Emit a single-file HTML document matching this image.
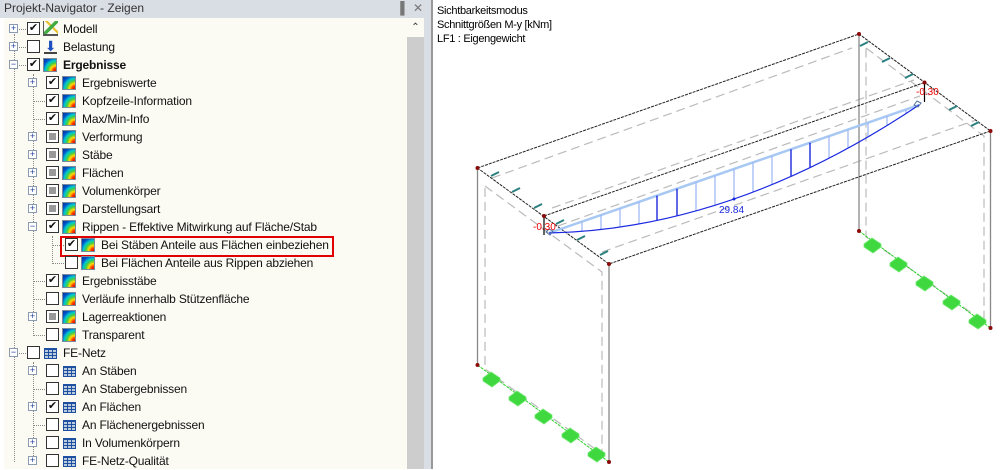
<!DOCTYPE html>
<html><head><meta charset="utf-8">
<style>
*{margin:0;padding:0;box-sizing:border-box}
body{width:1006px;height:469px;overflow:hidden;background:#fff;font-family:"Liberation Sans",Arial,sans-serif;position:relative}
#title{position:absolute;left:0;top:0;width:431px;height:18px;background:#d9dde4;font-size:12px;color:#333;padding:1px 0 0 4px}
#title .btn{position:absolute;top:1px;font-size:12px;color:#777}
#panel{position:absolute;left:4px;top:18px;width:403px;height:451px;background:#fbfbf3}
#sb{position:absolute;left:407px;top:18px;width:17px;height:451px;background:#cdcdcd}
#sbup{position:absolute;left:407px;top:18px;width:17px;height:19px;background:#fbfbf3;font-size:10px;color:#333;text-align:center;line-height:20px}
#gap{position:absolute;left:424px;top:18px;width:7px;height:451px;background:#d9dde4}
#vline{position:absolute;left:431px;top:0;width:2px;height:469px;background:#999}
.r{position:absolute;height:18px;font-size:12px;color:#111;white-space:nowrap;letter-spacing:-0.17px}
.ex{position:absolute;width:9px;height:9px;border:1px solid #8a9ab0;background:#fff;font-size:9px;line-height:7px;text-align:center;color:#2040a0;letter-spacing:0}
.cb{position:absolute;width:13px;height:13px;border:1px solid #333;background:#fff;top:2px;font-size:11px;line-height:11px;text-align:center;color:#111;letter-spacing:0}
.cb.i::after{content:"";position:absolute;left:2px;top:2px;width:7px;height:7px;background:#999}
.ic{position:absolute;width:14px;height:14px;top:2px;border:1px solid #7a8a9a;background:radial-gradient(circle at 100% 100%,#d00 0,#f40 18%,#fd0 32%,#4c4 48%,#0cc 62%,#05c 78%,#039 100%)}
.gr{position:absolute;width:13px;height:11px;top:4px;border:1px solid #1f4fa0;background:repeating-linear-gradient(90deg,transparent 0 3px,#1f4fa0 3px 4px),repeating-linear-gradient(0deg,#bcd 0 2px,#1f4fa0 2px 3px)}
.tx{position:absolute;top:2px}
.hd{position:absolute;border-left:1px dotted #888}
.hh{position:absolute;border-top:1px dotted #888;height:0}
#info{position:absolute;left:437px;top:4px;font-size:11px;line-height:14px;color:#000;letter-spacing:-0.3px}
</style></head><body>
<div id="title">Projekt-Navigator - Zeigen<span class="btn" style="left:396px">&#x2590;</span><span class="btn" style="left:413px">✕</span></div>
<div id="panel"></div>
<div id="sb"></div><div id="sbup">&#x2303;</div>
<div id="gap"></div><div id="vline"></div>

<div class="hd" style="left:14px;top:34px;height:428px"></div>
<div class="hd" style="left:33px;top:74px;height:262px"></div>
<div class="hd" style="left:33px;top:362px;height:100px"></div>
<div class="hd" style="left:52px;top:236px;height:28px"></div>
<div class="hh" style="left:14px;top:29px;width:12px"></div>
<div class="hh" style="left:14px;top:47px;width:12px"></div>
<div class="hh" style="left:14px;top:65px;width:12px"></div>
<div class="hh" style="left:14px;top:353px;width:12px"></div>
<div class="hh" style="left:52px;top:245px;width:12px"></div>
<div class="hh" style="left:52px;top:263px;width:12px"></div>

<div class="r" style="top:20px;left:0"><div class="ex" style="left:9px;top:4px">+</div><div class="cb" style="left:27px">✔</div><div style="position:absolute;left:43px;top:1px;width:15px;height:15px;border-bottom:2px solid #555;border-left:1px solid #555;background:linear-gradient(135deg,transparent 40%,#4a4 41% 58%,transparent 59%),linear-gradient(45deg,transparent 50%,#e9c030 51% 62%,transparent 63%)"></div><span class="tx" style="left:63px">Modell</span></div>
<div class="r" style="top:38px;left:0"><div class="ex" style="left:9px;top:4px">+</div><div class="cb" style="left:27px"></div><div style="position:absolute;left:44px;top:2px;width:13px;height:14px;color:#2050c0;font-size:14px;line-height:12px;text-align:center;border-bottom:2px solid #444">⬇</div><span class="tx" style="left:63px">Belastung</span></div>
<div class="r" style="top:56px;left:0"><div class="ex" style="left:9px;top:4px">−</div><div class="cb" style="left:27px">✔</div><div class="ic" style="left:43px"></div><span class="tx" style="left:63px;font-weight:bold">Ergebnisse</span></div>

<div class="r" style="top:74px;left:19px"><div class="ex" style="left:9px;top:4px">+</div><div class="cb" style="left:27px">✔</div><div class="ic" style="left:43px"></div><span class="tx" style="left:63px">Ergebniswerte</span></div>
<div class="r" style="top:92px;left:19px"><div class="hh" style="left:14px;top:9px;width:12px"></div><div class="cb" style="left:27px">✔</div><div class="ic" style="left:43px"></div><span class="tx" style="left:63px">Kopfzeile-Information</span></div>
<div class="r" style="top:110px;left:19px"><div class="hh" style="left:14px;top:9px;width:12px"></div><div class="cb" style="left:27px">✔</div><div class="ic" style="left:43px"></div><span class="tx" style="left:63px">Max/Min-Info</span></div>
<div class="r" style="top:128px;left:19px"><div class="ex" style="left:9px;top:4px">+</div><div class="cb i" style="left:27px"></div><div class="ic" style="left:43px"></div><span class="tx" style="left:63px">Verformung</span></div>
<div class="r" style="top:146px;left:19px"><div class="ex" style="left:9px;top:4px">+</div><div class="cb i" style="left:27px"></div><div class="ic" style="left:43px"></div><span class="tx" style="left:63px">Stäbe</span></div>
<div class="r" style="top:164px;left:19px"><div class="ex" style="left:9px;top:4px">+</div><div class="cb i" style="left:27px"></div><div class="ic" style="left:43px"></div><span class="tx" style="left:63px">Flächen</span></div>
<div class="r" style="top:182px;left:19px"><div class="ex" style="left:9px;top:4px">+</div><div class="cb i" style="left:27px"></div><div class="ic" style="left:43px"></div><span class="tx" style="left:63px">Volumenkörper</span></div>
<div class="r" style="top:200px;left:19px"><div class="ex" style="left:9px;top:4px">+</div><div class="cb i" style="left:27px"></div><div class="ic" style="left:43px"></div><span class="tx" style="left:63px">Darstellungsart</span></div>
<div class="r" style="top:218px;left:19px"><div class="ex" style="left:9px;top:4px">−</div><div class="cb" style="left:27px">✔</div><div class="ic" style="left:43px"></div><span class="tx" style="left:63px">Rippen - Effektive Mitwirkung auf Fläche/Stab</span></div>
<div class="r" style="top:236px;left:38px"><div class="cb" style="left:27px">✔</div><div class="ic" style="left:43px"></div><span class="tx" style="left:63px">Bei Stäben Anteile aus Flächen einbeziehen</span></div>
<div style="position:absolute;left:60px;top:236px;width:274px;height:21px;border:2px solid #e00000"></div>
<div class="r" style="top:254px;left:38px"><div class="cb" style="left:27px"></div><div class="ic" style="left:43px"></div><span class="tx" style="left:63px">Bei Flächen Anteile aus Rippen abziehen</span></div>
<div class="r" style="top:272px;left:19px"><div class="hh" style="left:14px;top:9px;width:12px"></div><div class="cb" style="left:27px">✔</div><div class="ic" style="left:43px"></div><span class="tx" style="left:63px">Ergebnisstäbe</span></div>
<div class="r" style="top:290px;left:19px"><div class="hh" style="left:14px;top:9px;width:12px"></div><div class="cb" style="left:27px"></div><div class="ic" style="left:43px"></div><span class="tx" style="left:63px">Verläufe innerhalb Stützenfläche</span></div>
<div class="r" style="top:308px;left:19px"><div class="ex" style="left:9px;top:4px">+</div><div class="cb i" style="left:27px"></div><div class="ic" style="left:43px"></div><span class="tx" style="left:63px">Lagerreaktionen</span></div>
<div class="r" style="top:326px;left:19px"><div class="hh" style="left:14px;top:9px;width:12px"></div><div class="cb" style="left:27px"></div><div class="ic" style="left:43px"></div><span class="tx" style="left:63px">Transparent</span></div>

<div class="r" style="top:344px;left:0"><div class="ex" style="left:9px;top:4px">−</div><div class="cb" style="left:27px"></div><div class="gr" style="left:44px"></div><span class="tx" style="left:63px">FE-Netz</span></div>
<div class="r" style="top:362px;left:19px"><div class="ex" style="left:9px;top:4px">+</div><div class="cb" style="left:27px"></div><div class="gr" style="left:44px"></div><span class="tx" style="left:63px">An Stäben</span></div>
<div class="r" style="top:380px;left:19px"><div class="hh" style="left:14px;top:9px;width:12px"></div><div class="cb" style="left:27px"></div><div class="gr" style="left:44px"></div><span class="tx" style="left:63px">An Stabergebnissen</span></div>
<div class="r" style="top:398px;left:19px"><div class="ex" style="left:9px;top:4px">+</div><div class="cb" style="left:27px">✔</div><div class="gr" style="left:44px"></div><span class="tx" style="left:63px">An Flächen</span></div>
<div class="r" style="top:416px;left:19px"><div class="hh" style="left:14px;top:9px;width:12px"></div><div class="cb" style="left:27px"></div><div class="gr" style="left:44px"></div><span class="tx" style="left:63px">An Flächenergebnissen</span></div>
<div class="r" style="top:434px;left:19px"><div class="ex" style="left:9px;top:4px">+</div><div class="cb" style="left:27px"></div><div class="gr" style="left:44px"></div><span class="tx" style="left:63px">In Volumenkörpern</span></div>
<div class="r" style="top:452px;left:19px"><div class="ex" style="left:9px;top:4px">+</div><div class="cb" style="left:27px"></div><div class="gr" style="left:44px"></div><span class="tx" style="left:63px">FE-Netz-Qualität</span></div>

<div id="info">Sichtbarkeitsmodus<br>Schnittgrößen M-y [kNm]<br>LF1 : Eigengewicht</div>

<svg style="position:absolute;left:0;top:0" width="1006" height="469" viewBox="0 0 1006 469">
<g stroke="#bbb" stroke-width="1.2" stroke-dasharray="9,5" fill="none">
<polygon points="485,186 602,272 602,454 485,369"/>
<polygon points="866,48 984,136 984,322 866,237"/>
<line x1="492" y1="178" x2="852" y2="48"/>
<line x1="552" y1="208" x2="914" y2="80"/>
<line x1="558" y1="226" x2="920" y2="96"/>
<line x1="602" y1="252" x2="976" y2="120"/>
</g>
<g stroke="#888" stroke-width="1.3">
<line x1="477.5" y1="168" x2="477.5" y2="365"/>
<line x1="609" y1="264" x2="609" y2="462"/>
<line x1="859" y1="34" x2="859" y2="231"/>
<line x1="990.5" y1="131" x2="990.5" y2="328"/>
</g>
<g stroke="#222" stroke-width="1" fill="none" stroke-dasharray="3,1">
<polygon points="477.5,168 859,34 990.5,131 609,264"/>
<line x1="544" y1="216" x2="924.5" y2="82.5"/>
</g>
<g stroke="#1ed01e" stroke-width="1" stroke-dasharray="3,1">
<line x1="477.5" y1="365" x2="609" y2="462"/>
<line x1="859" y1="231" x2="990.5" y2="328"/>
</g>
<g fill="#3fd83f" stroke="#6fe86f" stroke-width="0.8">
<path d="M483,378 l8,-6 l9,6 v3 l-8,6 l-9,-6z"/>
<path d="M509,397 l8,-6 l9,6 v3 l-8,6 l-9,-6z"/>
<path d="M535,415 l8,-6 l9,6 v3 l-8,6 l-9,-6z"/>
<path d="M562,434 l8,-6 l9,6 v3 l-8,6 l-9,-6z"/>
<path d="M588,453 l8,-6 l9,6 v3 l-8,6 l-9,-6z"/>
<path d="M864,244 l8,-6 l9,6 v3 l-8,6 l-9,-6z"/>
<path d="M890,263 l8,-6 l9,6 v3 l-8,6 l-9,-6z"/>
<path d="M916,282 l8,-6 l9,6 v3 l-8,6 l-9,-6z"/>
<path d="M943,301 l8,-6 l9,6 v3 l-8,6 l-9,-6z"/>
<path d="M969,320 l8,-6 l9,6 v3 l-8,6 l-9,-6z"/>
</g>
<g stroke="#2a8080" stroke-width="2">
<line x1="491" y1="176" x2="499" y2="172"/><line x1="512" y1="192" x2="520" y2="188"/>
<line x1="534" y1="208" x2="542" y2="204"/><line x1="556" y1="224" x2="564" y2="220"/>
<line x1="577" y1="240" x2="585" y2="236"/><line x1="600" y1="255" x2="608" y2="251"/>
<line x1="860" y1="46" x2="868" y2="42"/><line x1="882" y1="62" x2="890" y2="58"/>
<line x1="905" y1="78" x2="913" y2="74"/><line x1="949" y1="110" x2="957" y2="106"/>
<line x1="971" y1="126" x2="979" y2="122"/>
</g>
<line x1="549" y1="233" x2="919" y2="105" stroke="#a8c8f4" stroke-width="2.5"/>
<g stroke="#9ab4f4" stroke-width="1.2">
<line x1="582" y1="221.6" x2="582" y2="231.3"/><line x1="601" y1="215" x2="601" y2="229.5"/>
<line x1="620" y1="208.4" x2="620" y2="227"/><line x1="639" y1="201.9" x2="639" y2="224"/>
<line x1="696" y1="182.1" x2="696" y2="210.8"/><line x1="715" y1="175.6" x2="715" y2="205.3"/>
<line x1="734" y1="169" x2="734" y2="199"/><line x1="753" y1="162.4" x2="753" y2="192.1"/>
<line x1="772" y1="155.9" x2="772" y2="184.6"/><line x1="829" y1="136.1" x2="829" y2="158.2"/>
<line x1="848" y1="129.6" x2="848" y2="148.2"/><line x1="868" y1="122.6" x2="868" y2="136.9"/>
<line x1="887" y1="116.1" x2="887" y2="125.6"/><line x1="906" y1="109.5" x2="906" y2="113.6"/>
</g>
<g stroke="#0a18d8" stroke-width="1.3">
<line x1="657" y1="195.6" x2="657" y2="220.4"/><line x1="677" y1="188.7" x2="677" y2="215.8"/>
<line x1="791" y1="149.3" x2="791" y2="176.5"/><line x1="810" y1="142.7" x2="810" y2="167.6"/>
</g>
<path d="M549,233 Q734,229 919,105" stroke="#1a28e0" stroke-width="1.2" fill="none"/>
<circle cx="734" cy="199" r="1.5" fill="#1a28e0"/>
<g stroke="#000" stroke-width="1.2"><line x1="544" y1="216" x2="544" y2="235"/><line x1="924.5" y1="82.5" x2="924.5" y2="102"/></g>
<g fill="none" stroke="#5070a0" stroke-width="1"><path d="M546,232 l3,-3 l4,2 l-3,4z"/><path d="M914,105 l3,-4 l4,2 l-3,4z"/></g>
<g fill="#8b0a0a">
<circle cx="477.5" cy="168" r="2"/><circle cx="609" cy="264" r="2"/><circle cx="859" cy="34" r="2"/><circle cx="990.5" cy="131" r="2"/>
<circle cx="477.5" cy="365" r="2"/><circle cx="609" cy="462" r="2"/><circle cx="859" cy="231" r="2"/><circle cx="990.5" cy="328" r="2"/>
<circle cx="544" cy="216" r="2"/><circle cx="924.5" cy="82.5" r="2"/>
</g>
<g fill="#e00" font-family="Liberation Sans,Arial,sans-serif" font-size="10">
<text x="533" y="230">-0.30</text><text x="916" y="95">-0.30</text>
</g>
<text x="719" y="213" fill="#1a28e0" font-family="Liberation Sans,Arial,sans-serif" font-size="10">29.84</text>
</svg>
</body></html>
